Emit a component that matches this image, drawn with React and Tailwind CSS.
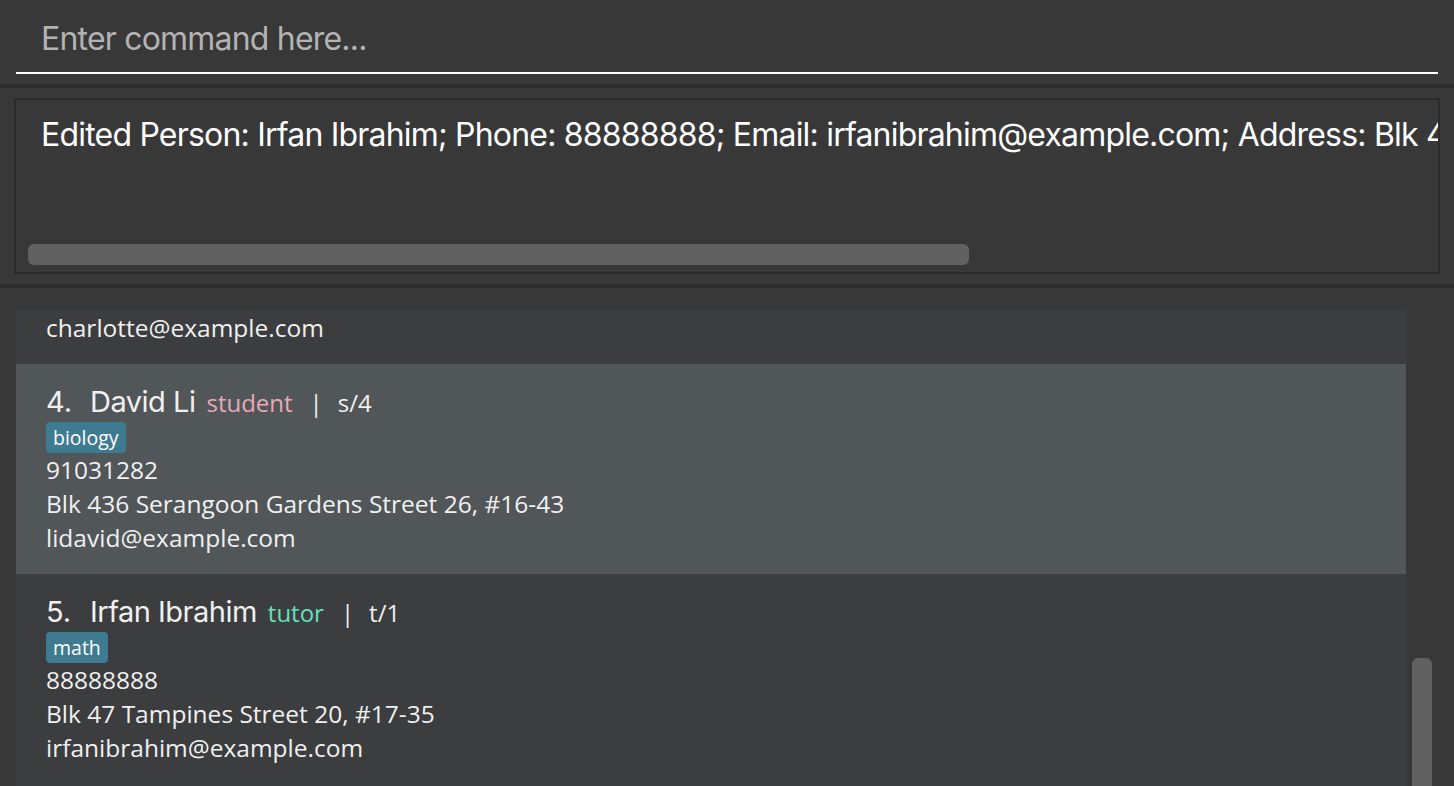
import React from 'react';

const people = [
  {
    id: 3,
    name: 'Charlotte Oliveiro',
    role: 'student',
    code: 's/3',
    tags: ['chemistry'],
    phone: '93210283',
    address: 'Blk 11 Ang Mo Kio Street 74, #11-04',
    email: 'charlotte@example.com',
  },
  {
    id: 4,
    name: 'David Li',
    role: 'student',
    code: 's/4',
    tags: ['biology'],
    phone: '91031282',
    address: 'Blk 436 Serangoon Gardens Street 26, #16-43',
    email: 'lidavid@example.com',
  },
  {
    id: 5,
    name: 'Irfan Ibrahim',
    role: 'tutor',
    code: 't/1',
    tags: ['math'],
    phone: '88888888',
    address: 'Blk 47 Tampines Street 20, #17-35',
    email: 'irfanibrahim@example.com',
  },
  {
    id: 6,
    name: 'Roy Balakrishnan',
    role: 'tutor',
    code: 't/2',
    tags: ['english'],
    phone: '92624417',
    address: 'Blk 45 Aljunied Street 85, #11-31',
    email: 'royb@example.com',
  },
];

function PersonCard({ person, selected }) {
  return (
    <div
      className={`h-[210px] shrink-0 pl-[30px] pt-[20px] text-[#f0f0f0] ${selected ? 'bg-[#515659]' : 'bg-[#3c3d3f]'}`}
      style={{ fontFamily: '"Open Sans", "Noto Sans", sans-serif' }}
    >
      <div className="flex items-baseline h-[36px] whitespace-nowrap">
        <span className="text-[29px] leading-[36px] w-[44px]" style={{ fontFamily: 'Inter, sans-serif' }}>{person.id}.</span>
        <span className="text-[29px] leading-[36px] tracking-[-0.5px]" style={{ fontFamily: 'Inter, sans-serif' }}>{person.name}</span>
        <span className={`ml-[11px] text-[24px] leading-[36px] ${person.role === 'student' ? 'text-[#e8a9b8]' : 'text-[#62e0c0]'}`}>
          {person.role}
        </span>
        <span className="ml-[17px] text-[24px] leading-[36px]">|</span>
        <span className="ml-[15px] text-[24px] leading-[36px]">{person.code}</span>
      </div>
      <div className="flex gap-2 mt-[2px]">
        {person.tags.map((tag) => (
          <span key={tag} className="h-[31px] px-[7px] rounded-[4px] bg-[#3e7b91] text-white text-[19.5px] leading-[31px]">
            {tag}
          </span>
        ))}
      </div>
      <div className="text-[24.5px] leading-[34px]">{person.phone}</div>
      <div className="text-[24.5px] leading-[34px]">{person.address}</div>
      <div className="text-[24.5px] leading-[34px]">{person.email}</div>
    </div>
  );
}

export default function App() {
  return (
    <div className="w-[1454px] h-[786px] bg-[#383838] overflow-hidden flex flex-col" style={{ fontFamily: 'Inter, sans-serif' }}>
      {/* Command box */}
      <div className="h-[84px] px-[16px] shrink-0">
        <div className="h-[74px] border-b-2 border-white pl-[25px] pt-[15px]">
          <span className="text-[32px] text-[#b3b3b3] tracking-[-0.8px]">Enter command here...</span>
        </div>
      </div>
      <div className="h-[4px] bg-[#2d2d2d] shrink-0" />

      {/* Result display */}
      <div className="h-[196px] shrink-0 px-[14px] pt-[10px]">
        <div className="h-[176px] border-2 border-[#2b2b2b] relative overflow-hidden">
          <div className="pl-[25px] pt-[11px] whitespace-nowrap text-white text-[32px] tracking-[-0.8px]">
            Edited Person: Irfan Ibrahim; Phone: 88888888; Email: irfanibrahim@example.com; Address: Blk 47 Tampines Street 20, #17-35; Tags: [math]
          </div>
          <div className="absolute left-[12px] top-[144px] w-[941px] h-[21px] rounded-[6px] bg-[#616161]" />
        </div>
      </div>
      <div className="h-[4px] bg-[#2d2d2d] shrink-0" />

      {/* Person list */}
      <div className="flex-1 flex pt-[22px] pl-[16px] min-h-0">
        <div className="w-[1390px] overflow-hidden">
          <div className="flex flex-col mt-[-156px]">
            {people.map((p) => (
              <PersonCard key={p.id} person={p} selected={p.id === 4} />
            ))}
          </div>
        </div>
        <div className="relative w-[20px] ml-[6px]">
          <div className="absolute left-0 top-[348px] w-[20px] h-[200px] rounded-[6px] bg-[#616161]" />
        </div>
      </div>
    </div>
  );
}
